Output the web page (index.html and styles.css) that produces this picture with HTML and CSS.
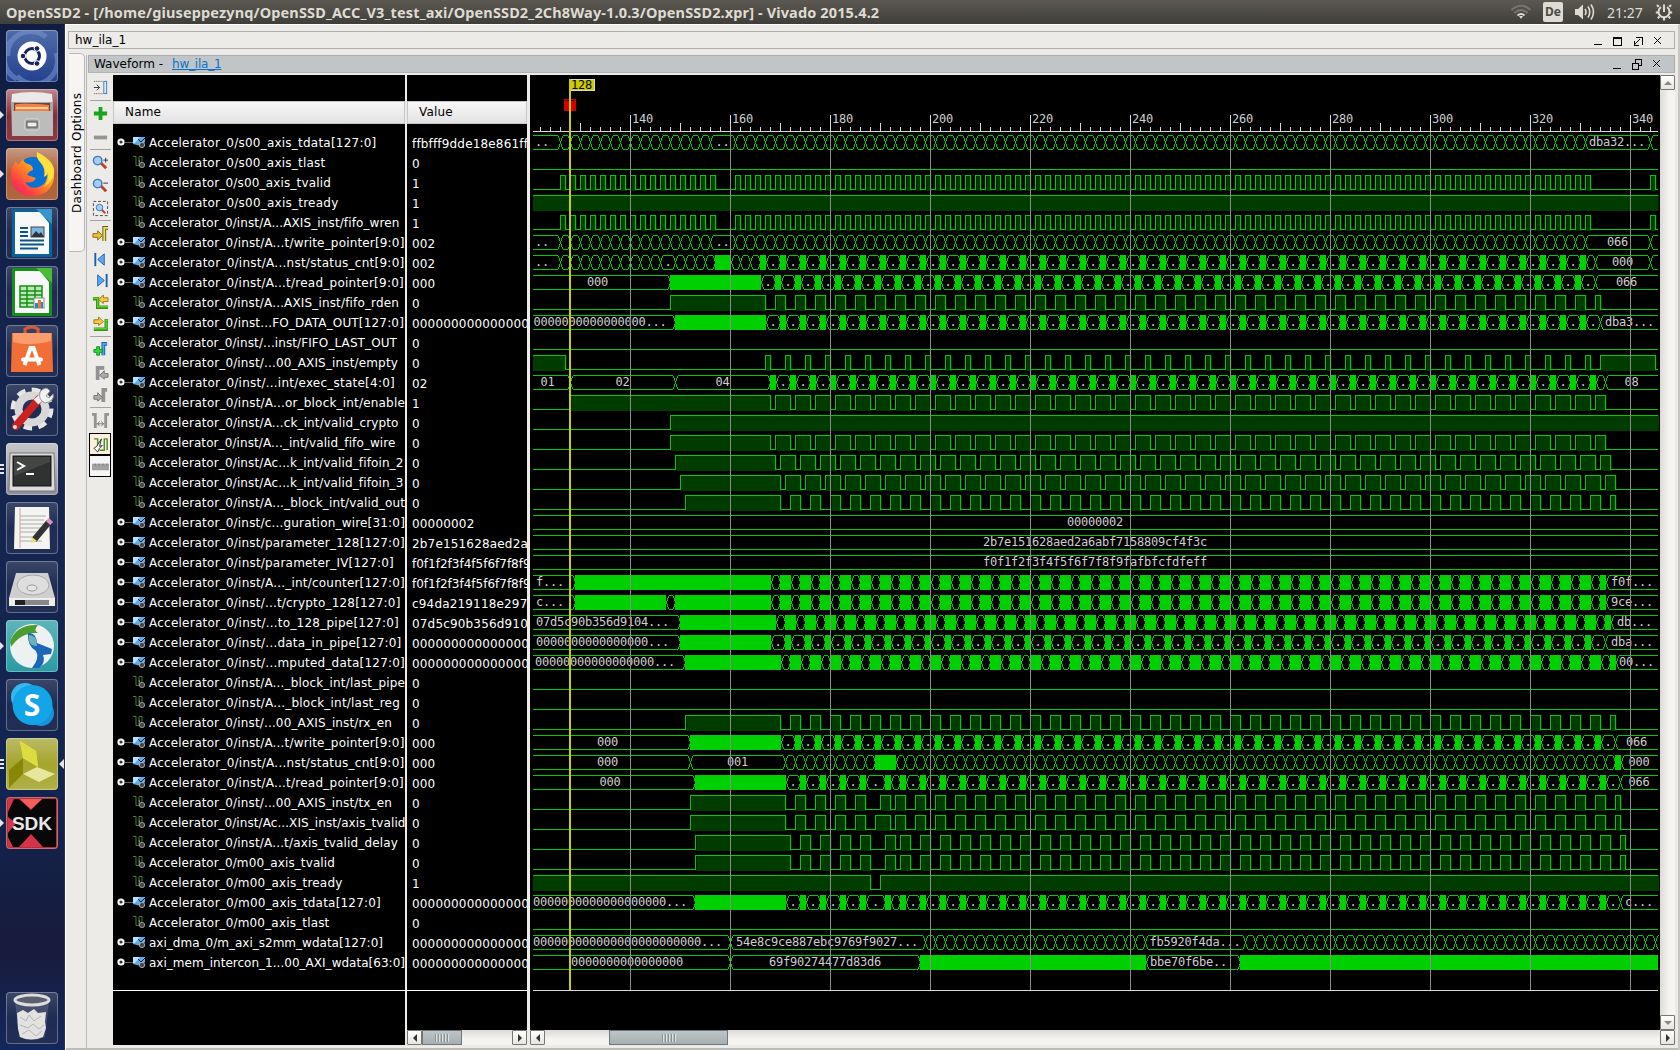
FILE: index.html
```html
<!DOCTYPE html>
<html lang="en">
<head>
<meta charset="utf-8">
<title>OpenSSD2 - Vivado 2015.4.2</title>
<link rel="stylesheet" href="styles.css">
</head>
<body>
<header class="topbar">
  <span class="title">OpenSSD2 - [/home/giuseppezynq/OpenSSD_ACC_V3_test_axi/OpenSSD2_2Ch8Way-1.0.3/OpenSSD2.xpr] - Vivado 2015.4.2</span>
  <div class="tray">
    <svg width="22" height="18" viewBox="0 0 22 18" fill="none" stroke="#77756f" stroke-width="2"><path d="M1.500 7Q11-1.500 20.500 7M4.500 10Q11 4 17.500 10"/><path d="M7.500 12.500Q11 9.500 14.500 12.500" stroke="#dfdbd2"/><path d="M9 13l2 3 2-3z" fill="#dfdbd2" stroke="none"/></svg>
    <span class="lang">De</span>
    <svg width="22" height="18" viewBox="0 0 22 18" fill="none" stroke="#dfdbd2" stroke-width="1.600"><path d="M1 6h3l5-4.500v15L4 12H1z" fill="#dfdbd2" stroke="none"/><path d="M11 6q2 3 0 6M14 3.500q3.500 5.500 0 11M17 1.500q5 7.500 0 15"/></svg>
    <span class="clock">21:27</span>
    <svg width="18" height="18" viewBox="0 0 18 18" fill="none" stroke="#dfdbd2"><path d="M6 4.200a5.500 5.500 0 1 0 6 0" stroke-width="2"/><path d="M9 1.500v7.500" stroke-width="2"/><path d="M3.700 3.700L2 2M14.300 3.700L16 2M3 9.500H.8M15 9.500h2.200M4.500 13.500L2.800 15.200M13.500 13.500l1.700 1.700M9 15v2.500" stroke-width="2.200"/></svg>
  </div>
</header>
<div class="desktop">
<nav class="launcher">
  <div class="tile dash"><svg viewBox="0 0 52 52"><path d="M2 26A23 22 0 0 1 40 7M11 49A24 24 0 0 1 6 10M50 23A23 23 0 0 1 11 46" fill="none" stroke="#7e9bd6" stroke-width="5" opacity=".5"/><circle cx="26" cy="26" r="14.500" fill="#fff"/><circle cx="26" cy="26" r="7.500" fill="none" stroke="#15265c" stroke-width="3"/><g fill="#15265c" stroke="#fff"><circle cx="17" cy="26" r="2.800"/><circle cx="31" cy="18.500" r="2.800"/><circle cx="31" cy="33.500" r="2.800"/></g></svg></div>
  <div class="tile files run"><svg viewBox="0 0 52 52"><path d="M6 5q20-4 40 0l1 11H5z" fill="#e9e9e7"/><path d="M5 13h42v34H6z" fill="#a8a8a8"/><path d="M8 14h36v8H8z" fill="#74403a"/><path d="M9 16q3-3 34 0v7H9z" fill="#ef8244"/><path d="M10 18h32v2H10z" fill="#ffd09c"/><path d="M6 22h41v25H6z" fill="#bcbcba"/><rect x="19" y="30" width="14" height="11" rx="2" fill="#9c9c9c" stroke="#ddd"/><rect x="21" y="33" width="10" height="5" fill="#eee" stroke="#555"/></svg></div>
  <div class="tile fox run"><svg viewBox="0 0 52 52"><defs><linearGradient id="fx" x1="1" y1="0" x2="0" y2="1"><stop offset="0" stop-color="#fff14a"/><stop offset=".4" stop-color="#ff981e"/><stop offset=".75" stop-color="#ff3b47"/><stop offset="1" stop-color="#e31587"/></linearGradient></defs><circle cx="27" cy="25" r="16" fill="#0872d4"/><path d="M39 10Q50 18 48 30 45 47 27 48 8 48 5 30 4 19 10 13l2 4 5-6q1 4 5 5 5 1 5 6-4 1-6 5l9 3q-3 6-11 4 5 8 14 5 10-4 8-17-1-6-2-12z" fill="url(#fx)"/><path d="M31 4q-1 6 3 10 6 6 4 15 4-2 4-5 1 9-4 15 10-6 10-17Q47 12 31 4z" fill="#ffdf39"/></svg></div>
  <div class="tile"><svg viewBox="0 0 52 52"><path d="M6 2h30l10 12v36H6z" fill="#0a6499"/><path d="M9 5h25l9 11v31H9z" fill="#f7f8f8"/><path d="M30 2h16v15z" fill="#3496cb"/><g stroke="#0b5689" stroke-width="2"><path d="M14 21h8M14 25h8M14 29h8M14 33.500h24M14 37.500h24M14 41.500h18"/></g><rect x="25" y="20" width="13" height="10" fill="#7ab8e4" stroke="#444"/><path d="M25 30l5-6 3 3 2-2 3 5z" fill="#333"/></svg></div>
  <div class="tile"><svg viewBox="0 0 52 52"><path d="M6 2h30l10 12v36H6z" fill="#188f18"/><path d="M9 5h25l9 11v31H9z" fill="#f7f8f8"/><path d="M30 2h16v15z" fill="#4abd36"/><path d="M14 20h22v21H14z" fill="#b8eab5"/><path d="M14 20h22v21H14zM14 25h22M14 29h22M14 33h22M14 37h22M21 20v21M29 20v21" stroke="#188f18" fill="none" stroke-width="1.500"/><rect x="28" y="32" width="10" height="10" fill="#fff" stroke="#888"/><path d="M29 42v-5h3v5zm6 0v-6h2v6z" fill="#2b88c0"/><path d="M32 34h3v8h-3z" fill="#f2762c"/></svg></div>
  <div class="tile"><svg viewBox="0 0 52 52"><path d="M19 10V4q7-4 13 0v6" fill="none" stroke="#d95a31" stroke-width="3"/><path d="M6 8h40l1 39H5z" fill="#f16f36"/><path d="M7 8h38v8q-19 6-38 1z" fill="#fa9c6b"/><path d="M18.500 40l6-17h3l6 17" fill="none" stroke="#fff" stroke-width="4"/><path d="M17 34.500h18" stroke="#fff" stroke-width="4" stroke-linecap="round"/></svg></div>
  <div class="tile"><svg viewBox="0 0 52 52"><circle cx="26" cy="25" r="18" fill="none" stroke="#e6e6e4" stroke-width="7" stroke-dasharray="8 6"/><circle cx="26" cy="25" r="13.500" fill="none" stroke="#d8d8d8" stroke-width="8"/><path d="M10 42L33 15" stroke="#c9221f" stroke-width="8" stroke-linecap="round"/><path d="M30 18L39 10" stroke="#eee" stroke-width="7"/><path d="M34 8q6-7 10-1l-4 5 3 2 4-4q2 7-8 9-7-3-5-11" fill="#f2f2f2" stroke="#999"/><circle cx="9" cy="43" r="2" fill="#eee"/></svg></div>
  <div class="tile term run"><svg viewBox="0 0 52 52"><path d="M4 10h44l1 38H3z" fill="#ddd" stroke="#777"/><rect x="7" y="13" width="38" height="30" fill="#2f3230" stroke="#111"/><path d="M8 14h36v5L8 33z" fill="#444644"/><path d="M11 19l7 4-7 4M20 31h8" fill="none" stroke="#fff" stroke-width="2"/></svg></div>
  <div class="tile"><svg viewBox="0 0 52 52"><path d="M9 5h34l1 42H8z" fill="#f4f4f0"/><path d="M14 6v40" stroke="#e39a9a"/><path d="M14 14h26M14 18h24M14 22h25M14 26h23M14 30h20M14 35h16M14 39h22" stroke="#aaa"/><path d="M28 38L43 20" stroke="#333" stroke-width="6"/><path d="M42 21l3-3" stroke="#df90c4" stroke-width="6"/><path d="M25 41l1-6 5 4z" fill="#eddc79"/></svg></div>
  <div class="tile"><svg viewBox="0 0 52 52"><path d="M10 12h32l7 25v6H3v-6z" fill="#cfcfcf"/><path d="M3 37h46v8H3z" fill="#eee"/><path d="M9 39h34v5H9z" fill="#888"/><path d="M9 39h10v5H9z" fill="#222"/><ellipse cx="27" cy="24" rx="16" ry="10" fill="#dedede" stroke="#aaa"/><ellipse cx="26" cy="27" rx="5" ry="3" fill="#e6e6e6" stroke="#999"/></svg></div>
  <div class="tile teal run"><svg viewBox="0 0 52 52"><circle cx="26" cy="26" r="22" fill="#eef1f2"/><path d="M4 22Q10 4 32 5q-5 5 0 8Q15 12 5 27z" fill="#4a9e2f"/><path d="M22 13q8-1 9 10l15 6-1 5-8 1q3 8-4 13h-7q8-10 4-17-9-5-8-18z" fill="#1b66b8"/><path d="M23 15q8 0 8 11-10 0-8-11z" fill="#6ab4b9"/></svg></div>
  <div class="tile"><svg viewBox="0 0 52 52"><circle cx="19" cy="18" r="14" fill="#35b9f0"/><circle cx="35" cy="34" r="13" fill="#1692dc"/><circle cx="26.500" cy="26" r="20" fill="#12a5e8"/><text x="26" y="37" class="skype">S</text></svg></div>
  <div class="tile viv run sel"><svg viewBox="0 0 52 52"><path d="M14 3l16 10 2 16-15-9z" fill="#e6e640"/><path d="M14 3l3 17 15 9-2-16z" fill="#dddc3e"/><path d="M3 32l14-12v16L3 50z" fill="#8a8708"/><path d="M17 36l14-7 18 7-16 8z" fill="#e7e79b"/></svg></div>
  <div class="tile sdk run"><svg viewBox="0 0 52 52"><path d="M2 2h48v48H2z" fill="#080808"/><path d="M2 2v13L8 2zM13 2h23L25 13zM2 20l8 6-8 10zM13 50l12-13 12 13zM2 40l5 10H2z" fill="#d8324a"/><path d="M14 2h22l-11 10z" fill="#ef605a"/><text x="26" y="33" class="sdktext">SDK</text></svg></div>
  <div class="tile trash"><svg viewBox="0 0 52 52"><path d="M9 9l4 36q13 6 26 0l4-36z" fill="#59627c" opacity=".6"/><ellipse cx="26" cy="8" rx="17" ry="5" fill="#5a606e" stroke="#ddd" stroke-width="3"/><path d="M11 21l6-3 5 3 6-4 4 4 8-1-1 10 1 6-3 9q-12 5-23 0l-2-8z" fill="#e2e2e0"/><path d="M14 25l6 4 3-6 5 6 7-5M14 33l8 3 5-4 6 5 5-4M16 42l7-4 7 6 6-5" fill="none" stroke="#b5b6b6"/></svg></div>
</nav>
<main class="window">
  <div class="ilabar"><span>hw_ila_1</span>
    <svg width="74" height="14" viewBox="0 0 74 14" fill="none" stroke="#000" shape-rendering="crispEdges"><path d="M1 11.500h8"/><path d="M20.500 4.500h8v8h-8zM20 5.500h9"/><path d="M43 4.500h7M49.500 4v8M47 6l-6 6M41.500 8v4.500h4"/><path d="M61 4l7 7M68 4l-7 7"/></svg>
  </div>
  <div class="body">
    <aside class="dashtab"><span>Dashboard Options</span></aside>
    <section class="wave">
      <div class="wavebar"><span class="wavename">Waveform -</span><span class="link">hw_ila_1</span>
        <svg width="52" height="14" viewBox="0 0 52 14" fill="none" stroke="#000" shape-rendering="crispEdges"><path d="M1 11.500h8"/><path d="M20.500 6.500h6v6h-6zM23.500 6.500v-4h6v6h-3"/><path d="M41 3l7 7M48 3l-7 7"/></svg>
      </div>
      <div class="main">
        <div class="tools">
          <div class="tool t25"><svg viewBox="0 0 18 18"><path d="M2 2.500h9M2 15.500h9" stroke="#555" stroke-dasharray="1 1"/><path d="M2 9h6M5 6l3 3-3 3" fill="none" stroke="#333"/><rect x="12.500" y="2.500" width="3" height="13" fill="#dcecff" stroke="#477bb5"/></svg></div>
          <hr>
          <div class="tool t25"><svg viewBox="0 0 18 18"><path d="M7 2h4v5h5v4h-5v5H7v-5H2V7h5z" fill="#18a51e"/></svg></div>
          <div class="tool t23"><svg viewBox="0 0 18 18"><path d="M2 7h14v4H2z" fill="#949494"/></svg></div>
          <hr>
          <div class="tool t24"><svg viewBox="0 0 18 18"><path d="M9 9l6 6" stroke="#c83a2c" stroke-width="3"/><circle cx="6" cy="7" r="4.500" fill="#9fd0fa" stroke="#4777b5" stroke-width="1.500"/><path d="M12 6.500h5M14.500 4v5" stroke="#333"/></svg></div>
          <div class="tool t22"><svg viewBox="0 0 18 18"><path d="M9 9l6 6" stroke="#c83a2c" stroke-width="3"/><circle cx="6" cy="7" r="4.500" fill="#9fd0fa" stroke="#4777b5" stroke-width="1.500"/><path d="M12 6.500h5" stroke="#333"/></svg></div>
          <div class="tool t24"><svg viewBox="0 0 18 18"><rect x="1.500" y="1.500" width="15" height="15" fill="none" stroke="#444" stroke-dasharray="3 2"/><path d="M9 9l5 5" stroke="#c83a2c" stroke-width="2"/><circle cx="8" cy="8" r="3.500" fill="#9fd0fa" stroke="#4777b5"/></svg></div>
          <hr>
          <div class="tool t27"><svg viewBox="0 0 18 18"><path d="M17 2h-4v14" fill="none" stroke="#555" stroke-width="4"/><path d="M17 2h-4v14" fill="none" stroke="#f6e81e" stroke-width="2"/><path d="M1 8h5V5l5 5-5 5v-3H1z" fill="#edbe39" stroke="#8f6d18"/></svg></div>
          <div class="tool t22"><svg viewBox="0 0 18 18"><path d="M3.500 2v14" stroke="#1c5faf" stroke-width="2"/><path d="M13 3v12L6 9z" fill="#58aaf5" stroke="#2462aa"/></svg></div>
          <div class="tool t21"><svg viewBox="0 0 18 18"><path d="M15.500 2v14" stroke="#1c5faf" stroke-width="2"/><path d="M6 3v12l7-6z" fill="#58aaf5" stroke="#2462aa"/></svg></div>
          <div class="tool t22"><svg viewBox="0 0 18 18"><path d="M1 5h5v9h11" fill="none" stroke="#3e8c1c" stroke-width="3.500"/><path d="M1 4.500h5v9h11" fill="none" stroke="#55d623" stroke-width="1.500"/><path d="M17 4h-5V1L7 6l5 4V8h5z" fill="#f4ca45" stroke="#a27413"/></svg></div>
          <div class="tool t23"><svg viewBox="0 0 18 18"><path d="M17 5h-2v9H2" fill="none" stroke="#3e8c1c" stroke-width="3.500"/><path d="M17 4.500h-2v9H2" fill="none" stroke="#55d623" stroke-width="1.500"/><path d="M2 4h5V1l5 5-5 4V8H2z" fill="#f4ca45" stroke="#a27413"/></svg></div>
          <hr>
          <div class="tool t25"><svg viewBox="0 0 18 18"><path d="M16 3h-4v12" fill="none" stroke="#1c5faf" stroke-width="4"/><path d="M16 3h-4v12" fill="none" stroke="#4aa5ee" stroke-width="2"/><path d="M5 6h3v3h3v3H8v3H5v-3H2V9h3z" fill="#32db36" stroke="#168b1b"/></svg></div>
          <div class="tool t22"><svg viewBox="0 0 18 18"><path d="M13 3H6v13" fill="none" stroke="#939393" stroke-width="4"/><path d="M17 9h-4V6l-5 5 5 4v-2h4z" fill="#aaa" stroke="#777"/></svg></div>
          <div class="tool t23"><svg viewBox="0 0 18 18"><path d="M16 3h-4v13" fill="none" stroke="#939393" stroke-width="4"/><path d="M2 9h4V6l5 5-5 4v-2H2z" fill="#aaa" stroke="#777"/></svg></div>
          <hr>
          <div class="tool t25"><svg viewBox="0 0 18 18"><path d="M0 2.500h4.500M3.500 1v16M18 2.500h-4.500M14.500 1v16" fill="none" stroke="#939393" stroke-width="3"/><path d="M5 12.500h8M8 10l-2 2.500L8 15M10 10l2 2.500-2 2.500" fill="none" stroke="#777"/></svg></div>
          <div class="tool toggle on"><svg viewBox="0 0 18 18"><path d="M2 3h4v12M8 15h5V3h3v12" fill="none" stroke="#478b39" stroke-width="1.500"/><path d="M10 3L8 11l3-1-3 3-2 4-4-4 3-2z" fill="#fff" stroke="#333"/></svg></div>
          <div class="tool toggle"><svg viewBox="0 0 18 18"><path d="M0 6h18v7H0z" fill="#a2a2a2"/><path d="M3.500 6v2M7.500 6v2M11.500 6v2M15.500 6v2" stroke="#777"/></svg></div>
        </div>
        <div class="col names"><div class="head">Name</div><div class="rows" id="names"></div></div>
        <div class="col values"><div class="head">Value</div><div class="rows" id="values"></div>
          <div class="hscroll"><i class="btn left"></i><i class="thumb t1"></i><i class="btn right"></i></div></div>
        <div class="plot">
          <svg id="plot" width="1130" height="955" viewBox="530 75 1130 955"></svg>
          <div class="hscroll"><i class="btn left"></i><i class="thumb t2"></i></div>
        </div>
        <div class="vscroll"><i class="btn up"></i><i class="btn down"></i><i class="btn right"></i></div>
      </div>
    </section>
  </div>
</main>
</div>
<script src="wave.js"></script>
</body>
</html>
```
FILE: styles.css
```css
* { box-sizing: border-box; }
body { margin: 0; width: 1680px; height: 1050px; overflow: hidden; font: 12px "DejaVu Sans", sans-serif; color: #000; background: #edebe7; display: flex; flex-direction: column; }
.topbar { height: 24px; flex: none; background: linear-gradient(#5b5951, #3f3e39); color: #dfdbd2; display: flex; align-items: center; justify-content: space-between; padding: 0 7px 0 6px; }
.title { font: bold 14.5px "Noto Sans", sans-serif; letter-spacing: .13px; white-space: nowrap; margin-top: -1px; }
.tray { display: flex; align-items: center; gap: 11px; }
.lang { background: #dfdbd2; color: #4b4944; font: bold 12px/20px "Noto Sans", sans-serif; width: 20px; height: 20px; text-align: center; border-radius: 2px; }
.clock { font: 14px "Noto Sans", sans-serif; width: 37px; }
.desktop { flex: 1; display: flex; min-height: 0; }
.launcher { width: 65px; flex: none; background: linear-gradient(#101c42, #15264f 40%, #122450 75%, #171b3b 90%, #14275c); padding: 6px 0 6px 6px; display: flex; flex-direction: column; gap: 7px; border-right: 1px solid #2c2f3c; }
.tile { width: 52px; height: 52px; flex: none; border-radius: 4px; background: linear-gradient(#3a4768, #1e2c54 50%, #222f55); box-shadow: inset 0 0 0 1px rgba(255,255,255,.3); position: relative; }
.tile svg { width: 52px; height: 52px; display: block; }
.dash { background: linear-gradient(#506ca8, #23418f); }
.files { background: linear-gradient(#bd8a90, #82303a 50%, #8c3b45); }
.fox { background: linear-gradient(#c59a83, #ad5e35 50%, #b0683f); }
.term { background: linear-gradient(#c5c5c9, #8b8d99); }
.teal { background: linear-gradient(#5db4ba, #2a9ba4); }
.viv { background: linear-gradient(#bcbb69, #a5a42b 50%, #b1b04b); }
.sdk { background: #b03038; }
.trash { margin-top: auto; }
.run::before { content: ""; position: absolute; left: -6px; top: 22px; border: 4px solid transparent; border-left-color: #e5e5e5; border-right: 0; }
.term::before, .viv::before { top: 21px; border: 0; width: 4px; height: 10px; background: repeating-linear-gradient(#e5e5e5 0 2px, transparent 2px 4px); }
.sel::after { content: ""; position: absolute; left: 53px; top: 21px; border: 5px solid transparent; border-right-color: #e5e5e5; border-left: 0; }
.skype { font: bold 30px "Open Sans", sans-serif; fill: #fff; text-anchor: middle; }
.sdktext { font: bold 19px "Liberation Sans", sans-serif; fill: #e8e8e8; text-anchor: middle; }
.window { flex: 1; min-width: 0; padding: 7px 3px 0 4px; border-left: 1px solid #fff; border-top: 1px solid #fff; border-right: 2px solid #c9c7c3; display: flex; flex-direction: column; position: relative; }
.ilabar { height: 18px; flex: none; border: 1px solid #b0afac; margin: -1px 0 6px -2px; padding: 0 7px 0 6px; display: flex; align-items: center; justify-content: space-between; font-size: 12px; }
.body { flex: 1; display: flex; min-height: 0; }
.dashtab { width: 18px; flex: none; border-right: 1px solid #b9b8b4; margin-left: -1px; }
.dashtab span { display: flex; align-items: center; justify-content: center; writing-mode: vertical-rl; transform: rotate(180deg); width: 16px; height: 199px; margin-top: -2px; background: #f6f5f3; border: 1px solid #b9b8b4; border-right: 0; border-radius: 5px 0 0 5px; font-size: 12px; letter-spacing: .3px; }
.wave { flex: 1; min-width: 0; display: flex; flex-direction: column; }
.wavebar { height: 18px; flex: none; margin-left: 1px; background: #c1c5c8; border: 1px solid #abaeb0; border-bottom-color: #b0b2b4; display: flex; align-items: center; padding: 0 10px 0 5px; }
.wavename { width: 78px; }
.link { color: #0c72c8; text-decoration: underline; letter-spacing: -.2px; }
.wavebar svg { margin-left: auto; }
.main { margin-top: 2px; height: 970px; display: flex; }
.tools { width: 26px; flex: none; padding-left: 2px; }
.tools hr { width: 21px; height: 1px; border: 0; margin: 0 0 0 1px; background: #a3a2a0; }
.tool { display: flex; align-items: center; justify-content: center; width: 22px; }
.tool svg { width: 17px; height: 17px; }
.t21 { height: 21px; } .t22 { height: 22px; } .t23 { height: 23px; } .t24 { height: 24px; } .t25 { height: 25px; } .t27 { height: 27px; }
.toggle { height: 22px; border: 1px solid #000; background: #f6f6f6; }
.toggle.on { background: #fdf1dd; }
.col { background: #000; color: #fff; display: flex; flex-direction: column; padding-top: 26px; overflow: hidden; flex: none; position: relative; }
.names { width: 292px; }
.values { width: 120px; margin-left: 2px; }
.head { height: 23px; flex: none; background: linear-gradient(#f8f8f8, #e2e2e4); color: #000; border: 1px solid #c6c6c6; padding-left: 11px; line-height: 21px; letter-spacing: .15px; }
.rows { height: 867px; flex: none; padding-top: 9px; border-bottom: 1px solid #fff; white-space: nowrap; overflow: hidden; }
.row { height: 20px; line-height: 20px; display: flex; align-items: center; }
.names .row svg { width: 29px; height: 16px; margin: -2px 3px 0 4px; flex: none; }
.values .row { padding: 2px 0 0 5px; letter-spacing: .17px; }
.values .row.tight { letter-spacing: 0; }
.values .hscroll { margin-top: auto; }
.plot { width: 1130px; flex: none; margin-left: 3px; background: #000; }
#plot { display: block; }
.plot text { font: 12px "DejaVu Sans Mono", monospace; letter-spacing: -.224px; fill: #cfcfcf; white-space: pre; }
.plot text.flag { fill: #000; }
.hscroll { height: 15px; flex: none; background: linear-gradient(#dddbd7, #f5f4f2 60%); display: flex; }
.btn { width: 15px; height: 15px; flex: none; border: 1px solid #77766f; border-radius: 1px; background: linear-gradient(#fff, #e6e5e2); display: flex; align-items: center; justify-content: center; }
.btn::before { content: ""; border: 4px solid transparent; }
.left::before { border-right-color: #333; border-left: 0; }
.right::before { border-left-color: #333; border-right: 0; }
.up::before { border-bottom-color: #8b8880; border-top: 0; }
.down::before { border-top-color: #8b8880; border-bottom: 0; }
.thumb { height: 15px; border: 1px solid #6f7679; background: linear-gradient(#bcc4c9, #a7afb2); display: flex; align-items: center; justify-content: center; }
.thumb::before { content: ""; width: 14px; height: 8px; background: repeating-linear-gradient(90deg, #8b9396 0 1px, #dbe0e2 1px 2px, transparent 2px 3px); }
.t1 { width: 40px; margin-right: auto; }
.t2 { width: 119px; margin-left: 64px; }
.vscroll { width: 15px; flex: none; background: linear-gradient(90deg, #dddbd7, #f5f4f2 60%); display: flex; flex-direction: column; }
.vscroll .down { margin-top: auto; }
.window::after { content: ""; height: 2px; position: absolute; left: 0; right: 0; bottom: 0; background: #bdbcb9; }
```
FILE: wave.js
```js
// Signal list: [name, value, width of the name in px, isBus]
const Z = '0'.repeat(24);
const V = '0'.repeat(15);
const A = 'Accelerator_0/';
const signals = [
  [A + 's00_axis_tdata[127:0]', 'ffbfff9dde18e861ff', 227.5, 1], [A + 's00_axis_tlast', '0', 176.5], [A + 's00_axis_tvalid', '1', 182],
  [A + 's00_axis_tready', '1', 189.5], [A + 'inst/A...AXIS_inst/fifo_wren', '1', 250.5], [A + 'inst/A...t/write_pointer[9:0]', '002', 255.5, 1],
  [A + 'inst/A...nst/status_cnt[9:0]', '002', 255.5, 1], [A + 'inst/A...t/read_pointer[9:0]', '000', 255, 1], [A + 'inst/A...AXIS_inst/fifo_rden', '0', 250],
  [A + 'inst...FO_DATA_OUT[127:0]', V, 255, 1], [A + 'inst/...inst/FIFO_LAST_OUT', '0', 248], [A + 'inst/...00_AXIS_inst/empty', '0', 249],
  [A + 'inst/...int/exec_state[4:0]', '02', 246, 1], [A + 'inst/A...or_block_int/enable', '1', 256], [A + 'inst/A...ck_int/valid_crypto', '0', 249.5],
  [A + 'inst/A..._int/valid_fifo_wire', '0', 246.5], [A + 'inst/Ac...k_int/valid_fifoin_2', '0', 254.5], [A + 'inst/Ac...k_int/valid_fifoin_3', '0', 254.5],
  [A + 'inst/A..._block_int/valid_out', '0', 256], [A + 'inst/c...guration_wire[31:0]', '00000002', 256, 1],
  [A + 'inst/parameter_128[127:0]', '2b7e151628aed2a', 256, 1], [A + 'inst/parameter_IV[127:0]', 'f0f1f2f3f4f5f6f7f8f9', 245, 1],
  [A + 'inst/A..._int/counter[127:0]', 'f0f1f2f3f4f5f6f7f8f9', 256, 1], [A + 'inst/...t/crypto_128[127:0]', 'c94da219118e297', 251.500, 1],
  [A + 'inst/...to_128_pipe[127:0]', '07d5c90b356d910', 250, 1], [A + 'inst/...data_in_pipe[127:0]', V, 252.500, 1],
  [A + 'inst/...mputed_data[127:0]', V, 256, 1], [A + 'inst/A..._block_int/last_pipe', '0', 256], [A + 'inst/A..._block_int/last_reg', '0', 251],
  [A + 'inst/...00_AXIS_inst/rx_en', '0', 243], [A + 'inst/A...t/write_pointer[9:0]', '000', 255.500, 1], [A + 'inst/A...nst/status_cnt[9:0]', '000', 255.500, 1],
  [A + 'inst/A...t/read_pointer[9:0]', '000', 255, 1], [A + 'inst/...00_AXIS_inst/tx_en', '0', 243], [A + 'inst/Ac...XIS_inst/axis_tvalid', '0', 256.500],
  [A + 'inst/A...t/axis_tvalid_delay', '0', 249], [A + 'm00_axis_tvalid', '0', 186], [A + 'm00_axis_tready', '1', 193.500],
  [A + 'm00_axis_tdata[127:0]', V, 232, 1], [A + 'm00_axis_tlast', '0', 180.500], ['axi_dma_0/m_axi_s2mm_wdata[127:0]', V, 234, 1],
  ['axi_mem_intercon_1...00_AXI_wdata[63:0]', V, 256, 1]
];
const busIcon = '<svg viewBox="0 0 29 16"><circle cx="4" cy="8" r="2.600" stroke="#fff" stroke-width="2" fill="#333"/><path d="M8 8.500h9" stroke="#666"/><path d="M16 3h12v5l-4 4-8-2z" fill="#58aef2"/><path d="M16 3h7l-5 6h-2z" fill="#b8e0ff"/><path d="M21 5l3 3 4-4" stroke="#111" fill="none"/><circle cx="25" cy="11" r="2.600" fill="#444" stroke="#aaa"/></svg>';
const bitIcon = '<svg viewBox="0 0 29 16"><path d="M16 2.500h3v9h3v-9h3v6" stroke="#4f7a40" fill="none"/><path d="M22 6l2 6" stroke="#888"/><circle cx="25" cy="11" r="2.600" fill="#444" stroke="#999"/></svg>';
document.getElementById('names').innerHTML = signals.map(s => `<div class="row">${s[3] ? busIcon : bitIcon}<span>${s[0]}</span></div>`).join('');
document.getElementById('values').innerHTML = signals.map(s => `<div class="row${s[1].startsWith('f0') ? ' tight' : ''}">${s[1]}</div>`).join('');
document.querySelectorAll('#names span').forEach((el, i) => {
  const spare = signals[i][2] - el.getBoundingClientRect().width;
  el.style.letterSpacing = (spare / signals[i][0].length).toFixed(3) + 'px';
});

const LEFT = 533, RIGHT = 1658, END = 999;
const X = t => t === END ? RIGHT : 630 + (t - 140) * 5;
const line = '#00cc00';
let out = '';
const text = (x, y, s, cls = '') => { out += `<text class="${cls}" x="${x}" y="${y}">${s}</text>`; };
const rect = (x, y, w, h, f) => { out += `<rect x="${x}" y="${y}" width="${w}" height="${h}" fill="${f}"/>`; };

// Pulses [rise, fall, rise, fall, ...]
function bit(row, edges) {
  const top = 135 + 20 * row;
  let d = '', px = LEFT, high = false;
  const y = h => top + (h ? .5 : 14.5);
  if (edges[0] < 100) { high = true; edges = edges.slice(1); }
  d = `M${LEFT} ${y(high)}`;
  for (const e of edges.concat(END)) {
    const x = X(e);
    if (high) {
      rect(px, top, Math.min(x + 2, RIGHT + 1) - px, 16, '#002200');
      rect(px === LEFT ? px : px + 2, top, x - px - (px === LEFT ? 0 : 1), 16, '#003c00');
    }
    if (e === END) { d += `H${RIGHT}`; break; }
    d += `H${x + .5}V${y(!high)}`;
    high = !high; px = x;
  }
  out += `<path d="${d}" stroke="${line}" fill="none"/>`;
}

// Segments: [end, label]; label '#' is a block too dense to draw, optional third item is the label's x
function bus(row, segs) {
  const top = 135 + 20 * row + .5, bot = top + 14, mid = top + 7;
  let a = 525, dense = false;
  for (const [end, label, lx] of segs) {
    const b = X(end);
    if (label === '#') {
      rect(a, top - .5, b - a + (end === END ? 0 : 1), 15, '#00cf00');
      dense = true;
    } else {
      const s = a + .5 + (dense ? 1 : 0), e = b + .5;
      // One edge of the eye, from the flat level `y` to the crossing in the middle
      const open = (y, k) => a === 525 ? `M${LEFT} ${y}` : `M${s} ${mid}L${s + 1} ${mid - 3 * k}L${s + 2} ${mid - 5.5 * k}L${s + 3} ${y}`;
      const close = (y, k) => end === END ? `H${RIGHT}` : `H${e - 3}L${e - 2} ${mid - 5.5 * k}L${e - 1} ${mid - 3 * k}L${e} ${mid}`;
      out += `<path d="${open(top, 1)}${close(top, 1)}${open(bot, -1)}${close(bot, -1)}" stroke="${line}" fill="none"/>`;
      if (label) {
        const w = label.length * 7;
        text(lx || Math.max(LEFT, (a + b + (label === '.' ? 1 : 0) - w) / 2), top + 10.5, label);
      }
      dense = false;
    }
    a = b;
  }
}

// Repeated pulses: high for `w` ticks, every `step`
function rep(from, to, w, step = 4) { const r = []; for (let t = from; t <= to; t += step) r.push(t, t + w); return r; }
// Repeated value changes without a label
function cross(from, to, step = 2) { const r = []; for (let t = from; t <= to; t += step) r.push([t, '']); return r; }
// Alternating values and dense blocks; `from` is the start of the first block
function mix(from, to, w, label) { const r = []; for (let t = from; t <= to; t += 4) r.push([t, label], [t + w, '#']); return r; }

const beat = [...cross(128, 156), [161, '..'], ...cross(163, 331)];
const fifoWrite = [...rep(126, 156, 1, 2), ...rep(161, 331, 1, 2), 344, 345];
bus(0, [[126, '..', 535], ...beat, [344, 'dba32...', 1589], [END, '']]);
bit(1, []);
bit(2, fifoWrite);
bit(3, [0]);
bit(4, fifoWrite);
bus(5, [[126, '..', 535], ...beat, [344, '066'], [END, '']]);
bus(6, [[126, '..', 535], ...cross(128, 146), [149, '.'], ...cross(151, 157), [160, '#'], [162, ''], [164, ''], [166, ''], [167, '#'], ...mix(170, 330, 1, '.'), [333, ''], [344, '000'], [END, '']]);
bus(7, [[148, '000'], [166, '#'], ...mix(169, 329, 1, '.'), [333, '.'], [END, '066']]);
bit(8, [148, 167, ...rep(169, 329, 2), 333, 334]);
bus(9, [[149, Z.slice(0, 16) + '...'], [167, '#'], ...mix(170, 330, 1, '.'), [334, '.'], [END, 'dba3...', 1605]]);
bit(10, []);
bit(11, [0, 127, ...rep(167, 331, 1), 334, 345]);
bus(12, [[128, '01'], [149, '02'], [168, '04'], [169, '#'], ...mix(172, 332, 1, '.'), [335, ''], [END, '08']]);
bit(13, [128, 168, ...rep(169, 329, 3), 333, 335]);
bit(14, [148]);
bit(15, [148, 168, ...rep(169, 329, 3), 333, 335]);
bit(16, [149, 169, ...rep(170, 330, 3), 334, 336]);
bit(17, [150, 170, ...rep(171, 331, 3), 335, 337]);
bit(18, [151, 170, ...rep(172, 332, 2), 336, 337]);
const wide = s => { const w = s.length * 7; return Math.floor(1095.5 - w / 2); };
['00000002', '2b7e151628aed2a6abf7158809cf4f3c', 'f0f1f2f3f4f5f6f7f8f9fafbfcfdfeff'].forEach((s, i) => bus(19 + i, [[END, s, wide(s)]]));
bus(22, [[129, 'f...', 536], [168, '#'], ...mix(170, 330, 2, ''), [334, ''], [335, '#'], [END, 'f0f...', 1611]]);
bus(23, [[129, 'c...', 536], [147, '#'], [149, ''], [168, '#'], ...mix(170, 330, 2, ''), [334, ''], [335, '#'], [END, '9ce...', 1611]]);
bus(24, [[150, '07d5c90b356d9104...', 536], [169, '#'], ...mix(171, 331, 2, ''), [335, ''], [336, '#'], [END, 'db...', 1617]]);
bus(25, [[150, Z.slice(0, 16) + '...', 536], [168, '#'], ...mix(171, 331, 1, '.'), [335, '.'], [END, 'dba...', 1611]]);
bus(26, [[151, Z.slice(0, 17) + '...', 535], [170, '#'], ...mix(172, 332, 2, ''), [336, ''], [337, '#'], [END, '00...', 1619]]);
bit(27, []);
bit(28, []);
bit(29, [151, 170, ...rep(172, 332, 2), 336, 337]);
bus(30, [[152, '000'], [170, '#'], ...mix(173, 333, 1, '.'), [337, '.'], [END, '066']]);
bus(31, [[152, '000'], [171, '001'], ...cross(173, 189), [193, '#'], ...cross(195, 337), [338, '#'], [END, '000']]);
const stall = [[171, '#'], ...mix(174, 186, 1, '.'), [191, '.'], [192, '#'], [194, ''], [195, '#'], ...mix(198, 334, 1, '.'), [338, '.']];
bus(32, [[153, '000'], ...stall, [END, '066']]);
bit(33, [152, 171, ...rep(173, 185, 2), 190, 192, 193, 195, ...rep(197, 333, 2), 337, 338]);
bit(34, [152, 171, ...rep(173, 185, 2), 189, 192, 193, 195, ...rep(197, 333, 2), 337, 338]);
const delayed = [153, 172, ...rep(174, 186, 2), 191, 193, 194, 196, ...rep(198, 334, 2), 338, 339];
bit(35, delayed);
bit(36, delayed);
bit(37, [0, 188, 190]);
bus(38, [[153, Z.slice(0, 19) + '...'], ...stall, [END, 'c...', 1625]]);
bit(39, []);
bus(40, [[160, Z + '...'], [199, '54e8c9ce887ebc9769f9027...', 736], ...cross(201, 243), [263, 'fb5920f4da...'], ...cross(265, 345), [END, '']]);
bus(41, [[160, Z.slice(0, 16), 571], [198, '69f90274477d83d6'], [243, '#'], [262, 'bbe70f6be..', 1150], [END, '#']]);

// Ruler and grid
rect(LEFT, 131, RIGHT - LEFT, 1, '#d8d8d8');
rect(LEFT, 990, RIGHT - LEFT, 1, '#d8d8d8');
for (let t = 122; t <= 344; t += 2) {
  const h = t % 20 === 0 ? 16 : t % 10 === 0 ? 8 : 4;
  rect(X(t), 131 - h, 1, h, '#d8d8d8');
  if (h === 16) { rect(X(t), 132, 1, 858, '#8c8c8c'); text(X(t) + 2, 123, t); }
}
// Trigger mark and cursor
rect(564, 99, 12, 12, '#d40000');
rect(566, 100, 8, 1, '#000');
rect(569, 79, 26, 12, '#d8d8d8');
rect(570, 80, 24, 10, '#cccc00');
rect(569, 79, 2, 911, '#cccc00');
text(571, 89, '128', 'flag');
document.getElementById('plot').innerHTML = `<g shape-rendering="crispEdges">${out}</g>`;
```
